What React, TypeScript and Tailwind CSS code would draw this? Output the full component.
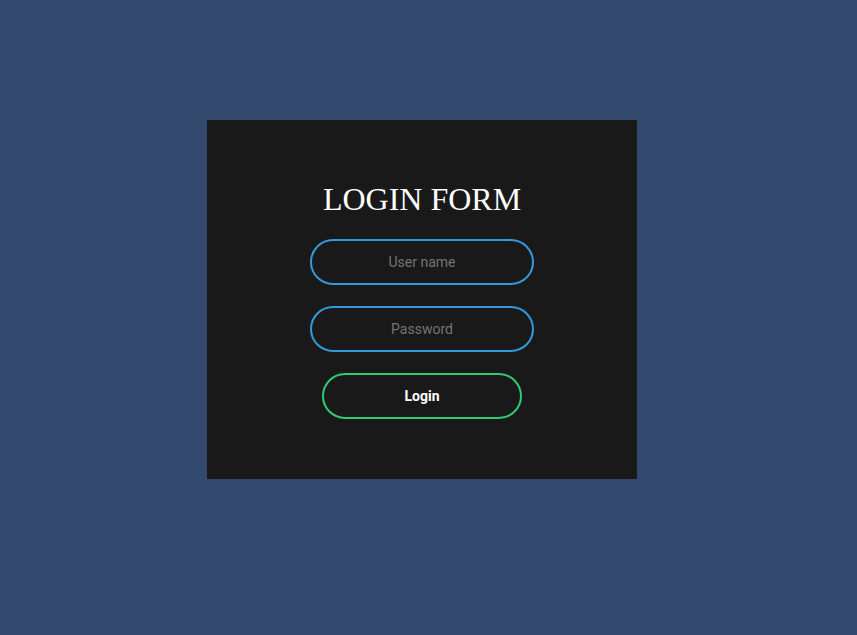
export default function App() {
    return (
        <div className="min-h-[635px] w-full bg-[#34496e] pt-[120px] pl-[207px]">
            <form
                className="flex w-[430px] h-[359px] flex-col items-center bg-[#191919] pt-[61px]"
                onSubmit={(e) => e.preventDefault()}
            >
                <h1 className="text-[32px] leading-[37px] font-normal text-white uppercase font-['Times_New_Roman','Liberation_Serif',serif]">
                    Login Form
                </h1>
                <input
                    type="text"
                    placeholder="User name"
                    className="mt-[21px] h-[46px] w-[224px] rounded-full border-2 border-[#3498db] bg-transparent text-center text-[14px] text-white outline-none placeholder:text-[#757575] font-['Roboto',sans-serif]"
                />
                <input
                    type="password"
                    placeholder="Password"
                    className="mt-[21px] h-[46px] w-[224px] rounded-full border-2 border-[#3498db] bg-transparent text-center text-[14px] text-white outline-none placeholder:text-[#757575] font-['Roboto',sans-serif]"
                />
                <button
                    type="submit"
                    className="mt-[21px] h-[46px] w-[200px] rounded-full border-2 border-[#2ecc71] bg-transparent text-[14px] font-bold text-white font-['Roboto',sans-serif]"
                >
                    Login
                </button>
            </form>
        </div>
    );
}
